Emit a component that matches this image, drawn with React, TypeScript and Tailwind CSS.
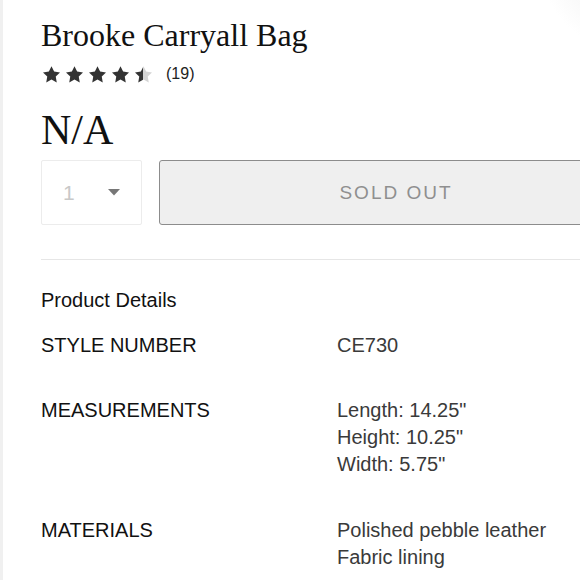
import React from "react";

const STAR = "M12 2l3.09 6.26L22 9.27l-5 4.87 1.18 6.88L12 17.77l-6.18 3.25L7 14.14 2 9.27l6.91-1.01L12 2z";

function Star({ fill }: { fill: "full" | "half" }) {
  return (
    <svg width="17" height="17" viewBox="2 2 20 19.5" className="shrink-0">
      <defs>
        <linearGradient id="halfgrad" x1="0" x2="1" y1="0" y2="0">
          <stop offset="50%" stopColor="#333333" />
          <stop offset="50%" stopColor="#d4d4d4" />
        </linearGradient>
      </defs>
      <path d={STAR} fill={fill === "full" ? "#333333" : "url(#halfgrad)"} />
    </svg>
  );
}

function Row({ label, values, className }: { label: string; values: string[]; className?: string }) {
  return (
    <div className={"flex " + (className ?? "")}>
      <div className="w-[296px] shrink-0 text-[#111111]">{label}</div>
      <div className="flex flex-col text-[#3a3a3a]">
        {values.map((v) => (
          <div key={v}>{v}</div>
        ))}
      </div>
    </div>
  );
}

export default function App() {
  return (
    <div className="relative w-[580px] h-[580px] overflow-hidden border-l-[3px] border-[#f0f0f0] bg-[radial-gradient(circle_at_108%_-6%,#e4e4e4_0px,#f6f6f6_45px,#ffffff_85px)]">
      <div className="pl-[38px] pt-[17px]">
        <h1 className="text-[32px] leading-[36px] text-[#111111] font-['Liberation_Serif',serif] whitespace-nowrap">
          Brooke Carryall Bag
        </h1>

        <div className="mt-[11px] h-[20px] flex items-center font-['Liberation_Sans',Arial,sans-serif]">
          <div className="ml-[2px] flex items-center gap-[6px]">
            <Star fill="full" />
            <Star fill="full" />
            <Star fill="full" />
            <Star fill="full" />
            <Star fill="half" />
          </div>
          <span className="ml-[14px] text-[16px] text-[#222222]">(19)</span>
        </div>

        <div className="mt-[24px] text-[42px] leading-[44px] text-[#111111] font-['Liberation_Serif',serif]">N/A</div>

        <div className="mt-[8px] flex gap-[17px] font-['Liberation_Sans',Arial,sans-serif]">
          <div className="w-[101px] h-[65px] shrink-0 rounded-[2px] border border-[#ececec] flex items-center pl-[21px] pr-[21px] justify-between">
            <span className="text-[21px] text-[#c8c8c8]">1</span>
            <svg width="12" height="7" viewBox="0 0 12 7">
              <path d="M0 0h12L6 6.5z" fill="#777777" />
            </svg>
          </div>
          <div className="w-[474px] h-[65px] shrink-0 rounded-[3px] border border-[#8c8c8c] bg-[#efefef] flex items-center justify-center">
            <span className="text-[19px] tracking-[2px] text-[#8f8f8f] pt-[1px]">SOLD OUT</span>
          </div>
        </div>

        <div className="mt-[34px] h-px bg-[#e6e6e6]" />

        <div className="mt-[27px] text-[20px] leading-[27px] font-['Liberation_Sans',Arial,sans-serif]">
          <div className="text-[#111111]">Product Details</div>
          <Row className="mt-[18px]" label="STYLE NUMBER" values={["CE730"]} />
          <Row className="mt-[38px]" label="MEASUREMENTS" values={['Length: 14.25"', 'Height: 10.25"', 'Width: 5.75"']} />
          <Row className="mt-[39px]" label="MATERIALS" values={["Polished pebble leather", "Fabric lining"]} />
        </div>
      </div>
    </div>
  );
}
